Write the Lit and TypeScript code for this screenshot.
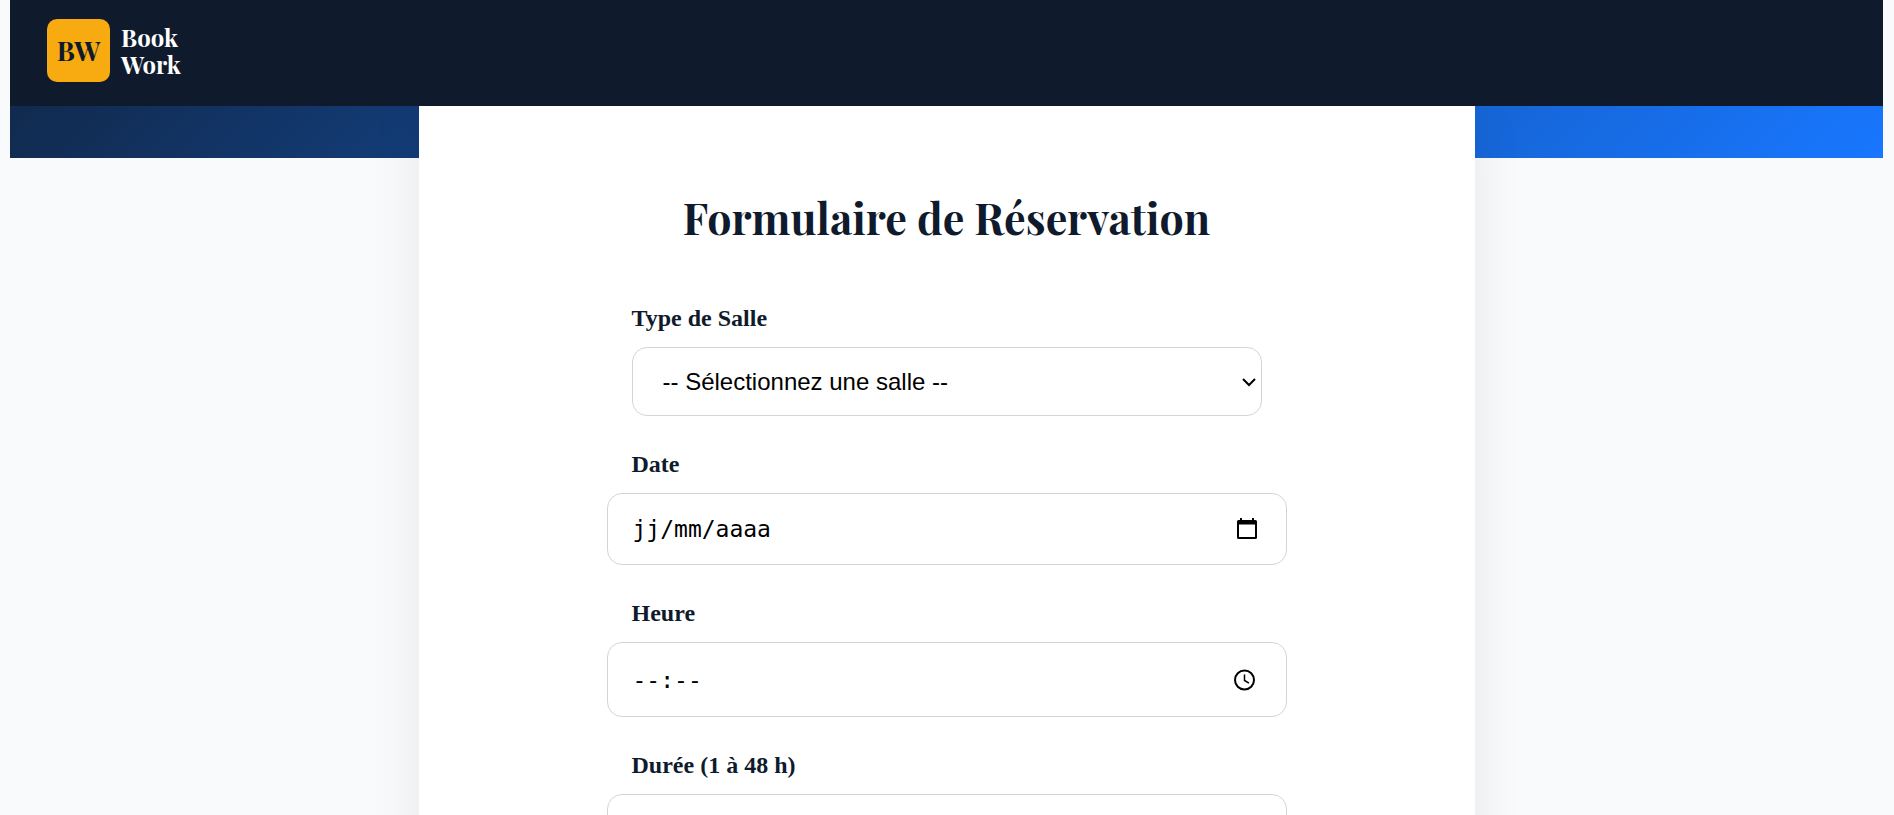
import { LitElement, html, css } from "lit";
import { customElement } from "lit/decorators.js";

@customElement("app-root")
export class AppRoot extends LitElement {
  static styles = css`
    :host {
      display: block;
      box-sizing: border-box;
      height: 100vh;
      overflow: auto;
      scrollbar-width: none;
      padding: 0 11px 0 10px;
      background: #f9fafc;
      color: #0f1b2d;
      font-family: "Playfair Display", "Liberation Serif", serif;
    }
    * {
      box-sizing: border-box;
    }
    .header {
      position: sticky;
      top: 0;
      z-index: 2;
      display: flex;
      align-items: flex-start;
      padding: 19px 37px 24px;
      background: #0f1b2d;
    }
    .brand {
      display: flex;
      align-items: center;
      gap: 11px;
      color: #fff;
      font-size: 24px;
      font-weight: 700;
      line-height: 27px;
      text-decoration: none;
    }
    .logo {
      display: grid;
      place-items: center;
      width: 63px;
      height: 63px;
      border-radius: 10px;
      background: #f7ab10;
      color: #0f1b2d;
      font-size: 27px;
    }
    .hero {
      height: 52px;
      background: linear-gradient(135deg, #112a4e, #1877ff);
    }
    .card {
      width: 100%;
      max-width: 1056px;
      margin: -52px auto 50px;
      padding: 80px 50px;
      background: #fff;
      box-shadow: 0 10px 50px rgba(0, 0, 0, 0.08);
    }
    .title {
      margin: 0 0 57px;
      font-size: 43px;
      line-height: 62px;
      text-align: center;
    }
    .form {
      display: grid;
      gap: 35px;
      max-width: 680px;
      margin: 0 auto;
    }
    .field {
      display: grid;
      gap: 16px;
    }
    .label {
      padding-left: 25px;
      font-family: "Liberation Serif", serif;
      font-size: 24px;
      font-weight: 700;
      line-height: 26px;
    }
    .box {
      display: flex;
      align-items: center;
      height: 72px;
      padding-right: 24px;
      border: 1px solid #d1d5db;
      border-radius: 15px;
      background: #fff;
    }
    .tall {
      height: 75px;
    }
    .input {
      flex: 1;
      min-width: 0;
      height: 100%;
      padding: 0 0 0 25px;
      border: 0;
      outline: 0;
      background: transparent;
      color: #000;
      font-family: "DejaVu Sans Mono", monospace;
      font-size: 23px;
    }
    .input::placeholder {
      color: #000;
      opacity: 1;
    }
    .pick {
      display: flex;
      padding: 0;
      border: 0;
      background: none;
      color: #000;
      cursor: pointer;
    }
    .select-wrap {
      display: grid;
      align-items: center;
      margin: 0 25px;
    }
    .select,
    .arrow {
      grid-area: 1 / 1;
    }
    .select {
      appearance: none;
      width: 100%;
      height: 69px;
      padding: 0 40px 0 30px;
      border: 1px solid #d1d5db;
      border-radius: 15px;
      background: #fff;
      color: #000;
      font-family: "Liberation Sans", Arial, sans-serif;
      font-size: 24px;
    }
    .arrow {
      justify-self: end;
      margin-right: 5px;
      pointer-events: none;
    }
  `;

  render() {
    return html`
      <header class="header">
        <a class="brand" href="#">
          <span class="logo">BW</span>
          <span>Book<br />Work</span>
        </a>
      </header>
      <div class="hero"></div>
      <main class="card">
        <h1 class="title">Formulaire de Réservation</h1>
        <form class="form">
          <div class="field">
            <label class="label" for="salle">Type de Salle</label>
            <div class="select-wrap">
              <select class="select" id="salle">
                <option>-- Sélectionnez une salle --</option>
              </select>
              <svg class="arrow" width="16" height="12" viewBox="0 0 16 12" fill="none" stroke="#000" stroke-width="2">
                <path d="M2 3l6 6 6-6" />
              </svg>
            </div>
          </div>
          <div class="field">
            <label class="label" for="date">Date</label>
            <div class="box">
              <input class="input" id="date" type="text" inputmode="numeric" placeholder="jj/mm/aaaa" />
              <button class="pick" type="button" aria-label="Choisir une date">
                <svg width="30" height="24" viewBox="0 0 30 24">
                  <path
                    fill="currentColor"
                    fill-rule="evenodd"
                    d="M8 1h2v2h10V1h2v2h1.500a1.500 1.500 0 0 1 1.500 1.500v16a1.500 1.500 0 0 1-1.500 1.500h-17A1.500 1.500 0 0 1 5 20.500v-16A1.500 1.500 0 0 1 6.500 3H8zM7 7.500v12.500h16V7.500z"
                  />
                </svg>
              </button>
            </div>
          </div>
          <div class="field">
            <label class="label" for="heure">Heure</label>
            <div class="box tall">
              <input class="input" id="heure" type="text" inputmode="numeric" placeholder="--:--" />
              <button class="pick" type="button" aria-label="Choisir une heure">
                <svg width="30" height="24" viewBox="0 0 30 24" fill="none" stroke="currentColor">
                  <circle cx="12.500" cy="12" r="9.500" stroke-width="2" />
                  <path d="M12.500 6.500v6l4.500 2.700" stroke-width="1.500" />
                </svg>
              </button>
            </div>
          </div>
          <div class="field">
            <label class="label" for="duree">Durée (1 à 48 h)</label>
            <div class="box">
              <input class="input" id="duree" type="number" min="1" max="48" />
            </div>
          </div>
        </form>
      </main>
    `;
  }
}
